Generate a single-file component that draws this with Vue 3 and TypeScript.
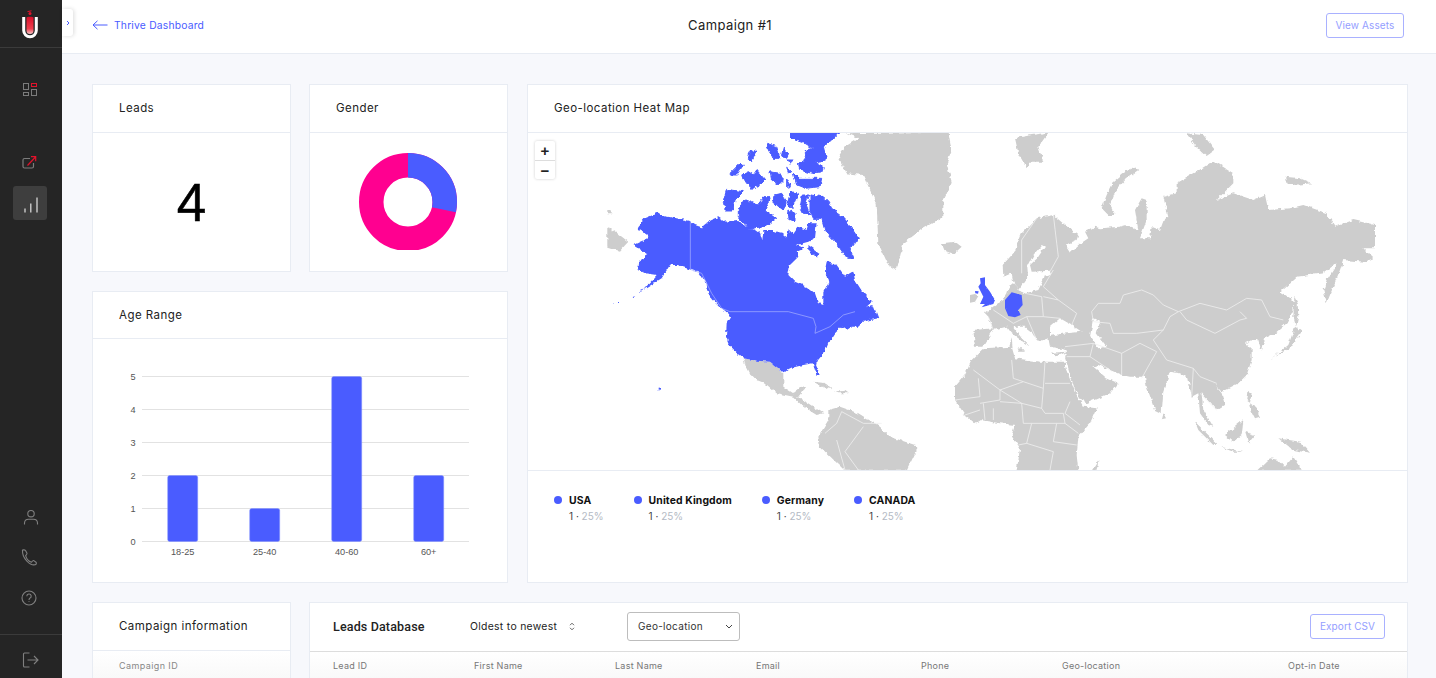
<script setup lang="ts">
const legend = [
  { name: 'USA' },
  { name: 'United Kingdom' },
  { name: 'Germany' },
  { name: 'CANADA' },
]
const columns = [
  { label: 'Lead ID', width: 141 },
  { label: 'First Name', width: 141 },
  { label: 'Last Name', width: 141 },
  { label: 'Email', width: 165 },
  { label: 'Phone', width: 141 },
  { label: 'Geo-location', width: 226 },
  { label: 'Opt-in Date', width: 90 },
]
const ages = [
  { label: '18-25', value: 2 },
  { label: '25-40', value: 1 },
  { label: '40-60', value: 5 },
  { label: '60+', value: 2 },
]
const ticks = [0, 1, 2, 3, 4, 5]
const tickY = (v: number) => 541.5 - v * 33
const barX = (i: number) => 167.7 + i * 82

const donutR = 36.75
const donutC = 2 * Math.PI * donutR
const blueDash = `${(donutC * 102) / 360} ${donutC}`

const arctic = [
  'M215 5 375 5 350 30 325 50 335 90 300 95 325 110 320 125 290 130 255 120 250 100 275 85 270 62 295 55 270 40 240 30Z',
  'M155 40 185 50 195 85 175 85 160 60Z',
  'M205 55 220 75 215 85 200 75Z',
  'M235 130 250 145 290 145 320 145 315 170 270 175 245 165Z',
  'M45 130 75 100 85 105 65 135 50 135Z',
  'M80 135 100 125 115 135 125 120 150 150 135 165 110 175 95 160Z',
  'M165 125 195 130 205 150 190 165 170 150Z',
  'M215 150 228 170 215 172Z',
  'M105 65 125 60 120 75 110 95 100 85Z',
  'M215 90 235 90 225 100Z',
  'M215 112 230 125 222 130Z',
  'M35 178 85 185 60 210 55 240 30 240 25 215Z',
  'M90 210 130 225 150 200 165 200 150 240 185 265 150 290 100 295 70 260 70 235Z',
  'M180 195 200 190 215 215 205 240 185 225 175 215Z',
  'M225 185 250 190 230 235 218 225Z',
  'M222 240 240 250 240 275 218 265Z',
  'M262 195 282 195 272 220 285 255 265 250 255 230Z',
  'M285 195 325 200 340 215 350 235 370 250 390 265 410 295 430 325 405 360 415 385 395 385 365 340 345 320 330 300 320 265 295 265 285 240Z',
]
const northAmerica =
  'M385 248 400 258 440 265 478 272 495 285 515 292 530 278 545 270 565 262 585 275 625 270 640 285 655 295 672 295 690 308 697 330 700 303 730 303 755 308 770 322 775 298 790 312 805 290 830 300 835 280 860 280 855 325 835 335 800 345 825 355 800 365 805 380 780 405 775 435 795 455 830 470 855 490 865 520 880 525 880 490 895 460 885 420 890 395 920 405 935 425 945 440 970 425 975 450 1000 490 1025 515 1010 530 1030 525 1045 565 1020 570 1000 575 985 590 965 590 950 600 935 590 915 610 895 640 885 665 860 695 858 705 870 735 860 735 848 700 820 705 780 715 760 730 745 715 720 695 680 692 640 685 615 665 600 650 588 620 590 580 600 562 597 552 570 530 545 505 530 478 525 455 510 430 485 420 440 405 420 405 395 445 340 480 380 435 345 430 322 418 325 395 340 385 355 375 330 358 310 345 330 335 355 325 345 310 320 295 345 265Z'
const eurasia =
  'M160 440 158 405 190 370 215 310 260 265 310 255 345 285 385 315 380 330 345 345 360 368 385 345 415 325 405 305 435 290 450 295 510 290 530 285 555 295 565 300 555 240 575 205 590 210 590 270 570 325 600 325 605 290 630 300 645 260 655 262 640 200 680 190 680 160 740 125 790 92 850 130 850 160 800 210 850 190 910 210 945 195 955 240 1020 235 1060 225 1130 250 1155 290 1210 270 1275 285 1275 355 1240 355 1270 385 1245 395 1180 390 1170 420 1130 520 1120 480 1130 450 1165 395 1120 430 1040 440 990 485 1030 510 1030 540 1010 580 975 610 945 625 935 665 925 630 905 630 885 640 905 655 905 690 890 735 865 760 815 785 790 760 815 790 825 825 800 840 780 815 755 790 760 840 790 890 775 885 750 850 745 790 725 800 715 745 690 730 660 725 640 785 635 850 615 840 590 770 585 740 540 740 515 735 480 720 445 705 430 710 470 745 505 760 480 790 410 820 400 815 375 780 355 715 345 680 350 660 300 650 295 625 265 635 250 610 225 590 190 590 215 625 240 650 225 640 185 610 170 590 130 600 100 650 75 650 70 600 130 595 115 560 105 550 130 530 160 510 172 490 180 462 195 465 205 480 225 490 265 480 285 440 240 430 205 480 190 455 185 430Z'
const seas = [
  'M275 345 285 350 262 385 240 405 245 425 300 422 305 430 275 440 265 470 225 490 205 480 235 450 232 410 250 375Z',
  'M300 590 330 565 365 585 395 605 330 612 300 618Z',
  'M430 565 450 575 440 610 470 650 445 655 420 620Z',
]
const islandsB = [
  'M555 112 565 120 530 145 495 185 480 225 495 255 475 255 455 235 470 195 490 155 525 125Z',
  'M195 25 245 15 295 8 265 50 280 95 240 95 230 115 205 70Z',
  'M710 10 760 15 795 60 770 78 735 45Z',
  'M1005 140 1050 145 1085 160 1030 165 1010 165Z',
  'M1033 500 1043 520 1045 560 1038 590 1030 560Z',
  'M1035 590 1055 605 1030 640 1020 655 970 680 960 690 990 665 1015 645Z',
  'M895 785 905 790 900 815 892 810Z',
  'M900 820 915 830 930 860 915 865 905 845Z',
  'M825 915 880 870 875 915 850 935Z',
  'M735 875 800 940 790 945 745 900Z',
  'M810 950 880 965 850 965Z',
  'M885 905 915 915 895 940Z',
  'M985 925 1050 935 1080 968 1030 960Z',
  'M920 1022 960 985 985 990 1005 1010 1030 980 1055 1022Z',
  'M640 850 648 865 635 868Z',
  'M445 990 440 1022 425 1022Z',
  'M300 668 350 665 320 680Z',
  'M185 625 188 655 178 650Z',
  'M210 650 225 665 200 665Z',
]
const bordersB = [
  'M425 545 445 520 510 520 520 495 575 480 610 495 640 525 685 545',
  'M685 545 750 520 830 540 890 505 935 510 960 560 1000 570',
  'M690 545 710 570 795 610 870 570 890 565 870 545',
  'M425 545 430 575 480 580 490 610 560 610 640 600 660 560 685 545',
  'M640 600 610 630 650 690 730 715 750 740 800 760',
  'M430 640 515 670 515 735',
  'M515 670 570 640 620 665 600 700 575 745',
  'M310 420 280 470 325 510 380 550 365 585',
  'M260 265 215 330 215 430',
  'M310 255 325 380 300 425',
  'M225 490 275 500 280 560 230 560 190 580 130 540',
  'M345 650 430 640 420 680 480 720',
  'M350 680 420 680',
  'M280 500 325 510 M280 560 330 565 M230 560 260 630 M130 600 115 560',
  'M730 715 725 800 M750 790 800 840',
]
const africa =
  'M100 10 185 5 195 40 270 50 285 50 345 50 345 65 375 140 400 185 440 190 420 235 385 275 380 330 385 378 200 378 210 310 185 270 195 240 150 235 90 225 75 235 45 210 15 165 15 125 45 90 65 45Z'
const bordersAfrica = [
  'M70 75 150 135 220 110 280 130 285 50',
  'M185 45 190 100 220 110',
  'M285 115 360 115',
  'M280 130 275 190 215 175 150 135',
  'M85 100 90 155 15 165',
  'M150 135 150 165 90 175',
  'M215 175 220 235',
  'M275 190 285 205 340 205 345 235 320 235 245 235 220 235',
  'M360 170 345 205 390 240',
  'M245 235 230 295 205 300',
  'M320 235 310 290 380 300',
  'M230 295 310 320 300 375',
  'M345 235 385 265',
  'M100 175 105 225 M130 190 130 225 M150 170 215 175 M45 210 90 195',
]
const grayA = [
  'M950 10 1255 5 1265 60 1250 100 1265 155 1240 210 1240 260 1180 295 1120 340 1100 420 1075 405 1045 340 1040 225 1000 135 950 130 925 80 945 50 985 25Z',
  'M1235 340 1275 335 1295 350 1268 375 1245 365Z',
  'M232 290 262 310 295 335 270 362 232 350Z',
  'M232 240 245 242 245 250 232 250Z',
  'M640 685 680 692 720 695 745 715 760 735 760 770 790 790 815 770 825 775 805 800 850 830 880 850 860 855 820 830 790 800 740 790 705 760 680 750 650 710Z',
  'M640 690 685 755 660 730Z',
  'M850 755 880 758 905 778 880 772Z',
  'M915 785 945 782 955 790 925 790Z',
  'M895 840 930 830 985 850 1050 890 1080 920 1155 945 1160 960 1130 1022 945 1022 870 950 865 920 895 870Z',
]
const bordersA = [
  'M885 910 920 880 935 845',
  'M920 930 945 1020',
  'M935 845 1000 880 1055 880',
  'M985 1020 945 965 1000 890',
]
const blueDots = [
  'M245 516h5v3h-5Z',
  'M265 513h5v3h-5Z',
  'M305 498l8-3v3l-6 3Z',
  'M330 483l8-4v3l-6 3Z',
  'M386 776h7v6h-7Z',
  'M835 345 870 370 860 385 835 365Z',
]
</script>

<template>
  <div class="app">
    <aside class="sidebar">
      <div class="logo">
        <svg width="18" height="30" viewBox="0 0 18 30">
          <defs>
            <linearGradient id="logoRed" x1="0" y1="0" x2="0" y2="1">
              <stop offset="0" stop-color="#d8102a" />
              <stop offset="0.7" stop-color="#f0404f" />
              <stop offset="1" stop-color="#f7c6c6" />
            </linearGradient>
          </defs>
          <circle cx="9" cy="3.4" r="1.5" fill="#e2122b" />
          <path d="M6.5 1.6 10.5 .8" stroke="#e2122b" stroke-width="1" />
          <path d="M5.5 7.5C5.5 6.5 12.5 6.5 12.5 7.5V20.5A3.5 3.5 0 0 1 5.5 20.5Z" fill="url(#logoRed)" />
          <path d="M2.7 7V20.5A6.3 6.3 0 0 0 15.3 20.5V7" fill="none" stroke="#fff" stroke-width="3" />
        </svg>
      </div>
      <nav class="nav">
        <div class="nav-item first">
          <svg width="34" height="34" viewBox="0 0 34 34" fill="none" stroke="#7c7c7c" stroke-width="1">
            <rect x="10.5" y="11.5" width="5" height="6" />
            <rect x="18.5" y="11.5" width="5" height="3" stroke="#e2122b" />
            <rect x="10.5" y="20.5" width="5" height="3" />
            <rect x="18.5" y="17.5" width="5" height="6" />
          </svg>
        </div>
        <div class="nav-item second">
          <svg width="34" height="34" viewBox="0 0 34 34" fill="none" stroke="#7c7c7c" stroke-width="1.2">
            <path d="M17 13.5H11.5A1.5 1.5 0 0 0 10 15V21.5A1.5 1.5 0 0 0 11.5 23H19A1.5 1.5 0 0 0 20.5 21.5V18" />
            <path d="M14.5 20.5 22.5 12M18 11.7H22.7V16.2" stroke="#e2122b" />
          </svg>
        </div>
        <div class="nav-item active">
          <svg width="34" height="34" viewBox="0 0 34 34" fill="none" stroke="#d6d6d6" stroke-width="1.3">
            <path d="M12 26.5V22.5M17.8 26.5V17.5M24 26.5V11.5" />
          </svg>
        </div>
      </nav>
      <div class="nav bottom">
        <div class="nav-item">
          <svg width="34" height="34" viewBox="0 0 34 34" fill="none" stroke="#808080" stroke-width="1.1">
            <circle cx="18" cy="13.7" r="3.2" />
            <path d="M11.5 24.5V23A4 4 0 0 1 15.5 19.2H20.5A4 4 0 0 1 24.5 23V24.5" />
          </svg>
        </div>
        <div class="nav-item">
          <svg width="34" height="34" viewBox="0 0 34 34" fill="none" stroke="#808080" stroke-width="1.1">
            <path d="M9.5 9.5C9 8.8 11.8 8.5 12.5 9.5L14 12.2C14.3 13 13 14 12.6 14.6 13.5 17.8 16.5 20.5 18.4 21.2 19 20.5 20 19.2 20.8 19.6L23 21.2C23.8 22 23.2 23.5 22 23.8 17.5 24.8 9 17.5 9.5 9.5Z" />
          </svg>
        </div>
        <div class="nav-item">
          <svg width="34" height="34" viewBox="0 0 34 34" fill="none" stroke="#808080" stroke-width="1.1">
            <circle cx="16" cy="17" r="7" />
            <path d="M13.8 15.2A2.2 2.2 0 1 1 16.8 17.3C16.2 17.7 16 18.2 16 19" />
            <path d="M16 20.3V21" />
          </svg>
        </div>
      </div>
      <div class="logout">
        <svg width="34" height="34" viewBox="0 0 34 34" fill="none" stroke="#808080" stroke-width="1.1">
          <path d="M16.5 10H11.5A1 1 0 0 0 10.5 11V23A1 1 0 0 0 11.5 24H16.5" />
          <path d="M14.5 17H25M21 13 25 17 21 21" />
        </svg>
      </div>
    </aside>

    <div class="toggle">
      <svg width="6" height="8" viewBox="0 0 6 8" fill="none" stroke="#4a5cff" stroke-width="1">
        <path d="M2 2 4 4 2 6" />
      </svg>
    </div>

    <div class="content">
      <header class="topbar">
        <a class="back">
          <svg width="16" height="10" viewBox="0 0 16 10" fill="none" stroke="#4a5cff" stroke-width="1">
            <path d="M15.5 5H1M5.5 .8 1 5 5.5 9.2" />
          </svg>
          Thrive Dashboard
        </a>
        <h1 class="title">Campaign #1</h1>
        <button class="outline view">View Assets</button>
      </header>

      <main class="page">
        <div class="top-row">
          <div class="left-col">
            <div class="small-row">
              <section class="card small">
                <div class="card-head">Leads</div>
                <div class="lead-count">4</div>
              </section>
              <section class="card small">
                <div class="card-head">Gender</div>
                <div class="donut">
                  <svg width="100" height="97" viewBox="0 0 100 97">
                    <circle cx="50" cy="49" :r="donutR" fill="none" stroke="#ff0090" stroke-width="24.5" />
                    <circle
                      cx="50"
                      cy="49"
                      :r="donutR"
                      fill="none"
                      stroke="#4a5cff"
                      stroke-width="24.5"
                      :stroke-dasharray="blueDash"
                      transform="rotate(-90 50 49)"
                    />
                  </svg>
                </div>
              </section>
            </div>
            <section class="card age">
              <div class="card-head age-head">Age Range</div>
              <svg class="chart" width="414" height="243" viewBox="93 339 414 243">
                <g v-for="t in ticks" :key="t">
                  <line x1="142" x2="469" :y1="tickY(t)" :y2="tickY(t)" stroke="#e2e2e2" stroke-width="1" />
                  <text x="135.5" :y="tickY(t) + 3.5" text-anchor="end" class="axis">{{ t }}</text>
                </g>
                <g v-for="(a, i) in ages" :key="a.label">
                  <rect
                    :x="barX(i)"
                    :y="tickY(a.value)"
                    width="30"
                    :height="a.value * 33"
                    rx="2"
                    fill="#4a5cff"
                    stroke="#8390ff"
                    stroke-width=".5"
                  />
                  <text :x="barX(i) + 15" y="555" text-anchor="middle" class="axis">{{ a.label }}</text>
                </g>
              </svg>
            </section>
          </div>

          <section class="card geo">
            <div class="card-head">Geo-location Heat Map</div>
            <div class="map">
              <svg class="map-svg" width="879" height="337" viewBox="528 133 879 337">
                <defs>
                  <filter
                    id="coast"
                    filterUnits="userSpaceOnUse"
                    x="500"
                    y="100"
                    width="940"
                    height="400"
                    color-interpolation-filters="sRGB"
                  >
                    <feTurbulence type="fractalNoise" baseFrequency="0.22" numOctaves="2" seed="4" result="n" />
                    <feDisplacementMap in="SourceGraphic" in2="n" scale="4.5" xChannelSelector="R" yChannelSelector="G" />
                    <feGaussianBlur stdDeviation="0.35" />
                  </filter>
                  <filter
                    id="coastFine"
                    filterUnits="userSpaceOnUse"
                    x="500"
                    y="100"
                    width="940"
                    height="400"
                    color-interpolation-filters="sRGB"
                  >
                    <feTurbulence type="fractalNoise" baseFrequency="0.35" numOctaves="2" seed="9" result="n" />
                    <feDisplacementMap in="SourceGraphic" in2="n" scale="2" xChannelSelector="R" yChannelSelector="G" />
                    <feGaussianBlur stdDeviation="0.25" />
                  </filter>
                </defs>
                <g filter="url(#coast)">
                  <g transform="translate(530 130) scale(.33333)">
                    <path v-for="d in grayA" :key="d" :d="d" fill="#cdcdcd" />
                    <path :d="northAmerica" fill="#4a5cff" />
                    <path v-for="d in blueDots" :key="d" :d="d" fill="#4a5cff" />
                  </g>
                  <g transform="translate(715 130) scale(.33333)">
                    <path
                      v-for="d in arctic"
                      :key="d"
                      :d="d"
                      fill="#4a5cff"
                      stroke="#4a5cff"
                      stroke-width="3"
                      stroke-linejoin="round"
                    />
                  </g>
                  <g transform="translate(950 130) scale(.33333)">
                    <path :d="eurasia" fill="#cdcdcd" />
                    <path v-for="d in seas" :key="d" :d="d" fill="#fff" />
                    <path v-for="d in islandsB" :key="d" :d="d" fill="#cdcdcd" />
                  </g>
                  <g transform="translate(950 345) scale(.33333)">
                    <path :d="africa" fill="#cdcdcd" />
                  </g>
                </g>
                <g transform="translate(530 130) scale(.33333)">
                  <path v-for="d in bordersA" :key="d" :d="d" class="border" />
                  <path
                    d="M481 275V418L515 430 545 490 575 535 600 545H775L850 565 858 590 855 610 900 590 940 555 975 545"
                    class="border blue"
                  />
                </g>
                <g transform="translate(950 130) scale(.33333)">
                  <path v-for="d in bordersB" :key="d" :d="d" class="border" />
                </g>
                <g transform="translate(950 345) scale(.33333)">
                  <path v-for="d in bordersAfrica" :key="d" :d="d" class="border" />
                </g>
                <g filter="url(#coastFine)">
                  <g transform="translate(950 230) scale(.33333)">
                    <path d="M60 195 75 192 85 198 75 215 60 218Z" fill="#cdcdcd" />
                    <path
                      d="M90 145 105 142 105 165 120 185 135 210 130 222 95 232 105 222 90 222 100 200 85 170 92 160Z"
                      fill="#4a5cff"
                    />
                    <path d="M75 183 86 184 84 191 76 190Z" fill="#4a5cff" />
                    <path
                      d="M185 187 215 195 218 225 205 240 212 255 195 262 175 258 165 235 165 210Z"
                      fill="#4a5cff"
                    />
                  </g>
                </g>
              </svg>
              <div class="zoom">
                <button class="zoom-btn">+</button>
                <button class="zoom-btn">−</button>
              </div>
            </div>
            <div class="legend">
              <div v-for="l in legend" :key="l.name" class="legend-item">
                <span class="dot"></span>
                <div>
                  <div class="legend-name">{{ l.name }}</div>
                  <div class="legend-val">1 · <span class="pct">25%</span></div>
                </div>
              </div>
            </div>
          </section>
        </div>

        <div class="bottom-row">
          <section class="card info">
            <div class="card-head">Campaign information</div>
            <div class="info-body">Campaign ID</div>
          </section>
          <section class="card db">
            <div class="db-head">
              <h2 class="db-title">Leads Database</h2>
              <div class="sort">
                Oldest to newest
                <svg width="6" height="9" viewBox="0 0 6 9" fill="none" stroke="#555" stroke-width=".9">
                  <path d="M1 3.2 3 1.2 5 3.2M1 5.8 3 7.8 5 5.8" />
                </svg>
              </div>
              <div class="select">
                Geo-location
                <svg width="8" height="5" viewBox="0 0 8 5" fill="none" stroke="#444" stroke-width="1">
                  <path d="M1 1 4 4 7 1" />
                </svg>
              </div>
              <button class="outline export">Export CSV</button>
            </div>
            <div class="db-cols">
              <div v-for="c in columns" :key="c.label" class="db-col" :style="{ width: c.width + 'px' }">
                {{ c.label }}
              </div>
            </div>
          </section>
        </div>
      </main>
    </div>
  </div>
</template>

<style>
html,
body {
  margin: 0;
  overflow: hidden;
}
</style>

<style scoped>
.app {
  display: flex;
  position: relative;
  height: 678px;
  overflow: hidden;
  background: #f7f8fc;
  font-family: Inter, "Open Sans", sans-serif;
  color: #222;
}
.sidebar {
  width: 62px;
  flex: none;
  display: flex;
  flex-direction: column;
  background: #252525;
}
.logo {
  height: 48px;
  flex: none;
  border-bottom: 1px solid #3b3b3b;
  display: flex;
  justify-content: center;
  padding: 10px 2px 0 0;
  box-sizing: border-box;
}
.nav {
  display: flex;
  flex-direction: column;
  padding-left: 13px;
}
.nav-item {
  width: 34px;
  height: 34px;
  border-radius: 3px;
}
.nav-item svg {
  display: block;
}
.first {
  margin-top: 24px;
}
.second {
  margin-top: 39px;
  margin-bottom: 7px;
}
.active {
  background: #3e3e3e;
}
.bottom {
  margin-top: auto;
  gap: 6.5px;
  padding-bottom: 19px;
}
.logout {
  height: 44px;
  flex: none;
  border-top: 1px solid #3b3b3b;
  padding: 8px 0 0 13px;
  box-sizing: border-box;
}
.logout svg {
  display: block;
}
.toggle {
  position: absolute;
  left: 62px;
  top: 9px;
  width: 11px;
  height: 27px;
  background: #fff;
  border-radius: 0 3px 3px 0;
  box-shadow: 1px 0 4px rgba(0, 0, 0, 0.14);
  display: flex;
  align-items: center;
  justify-content: center;
}
.content {
  flex: 1;
  min-width: 0;
}
.topbar {
  height: 54px;
  box-sizing: border-box;
  background: #fff;
  border-bottom: 1px solid #e8ecf3;
  display: flex;
  align-items: center;
  padding: 0 32px 2px 30px;
}
.back {
  display: flex;
  align-items: center;
  gap: 6px;
  margin-bottom: 2px;
  font-size: 10.3px;
  color: #4a5cff;
  letter-spacing: 0.2px;
}
.title {
  margin: 0 0 2px 484px;
  font-size: 13px;
  font-weight: 400;
  letter-spacing: 0.4px;
  color: #222;
}
.outline {
  font-family: inherit;
  background: #fff;
  border: 1px solid #a9b1ff;
  border-radius: 3px;
  color: #949eff;
  font-size: 10px;
  height: 25px;
  padding: 0;
  letter-spacing: 0.1px;
}
.view {
  margin-left: auto;
  width: 78px;
  padding-bottom: 2px;
}
.page {
  padding: 30px 28px 0 30px;
}
.top-row {
  display: flex;
  gap: 19px;
}
.left-col {
  width: 416px;
  display: flex;
  flex-direction: column;
  gap: 19px;
}
.small-row {
  display: flex;
  gap: 18px;
}
.card {
  background: #fff;
  border: 1px solid #e8ecf3;
  box-sizing: border-box;
}
.small {
  width: 199px;
  height: 188px;
}
.card-head {
  height: 48px;
  box-sizing: border-box;
  border-bottom: 1px solid #e8ecf3;
  padding: 0 0 2px 26px;
  display: flex;
  align-items: center;
  font-size: 11.5px;
  letter-spacing: 0.45px;
  color: #222;
}
.age-head {
  height: 47px;
  padding-bottom: 0;
}
.lead-count {
  font-family: "Liberation Sans", Arial, sans-serif;
  font-size: 53px;
  line-height: 140px;
  text-align: center;
  color: #000;
  -webkit-text-stroke: 0.5px #000;
}
.donut {
  display: flex;
  justify-content: center;
  padding: 20px 2px 0 0;
}
.age {
  height: 292px;
}
.chart {
  display: block;
}
.axis {
  font-family: "Liberation Sans", Arial, sans-serif;
  font-size: 9.2px;
  fill: #555;
}
.geo {
  width: 881px;
  height: 499px;
  flex: none;
}
.map {
  position: relative;
  height: 337px;
  overflow: hidden;
}
.map-svg {
  display: block;
}
.border {
  fill: none;
  stroke: #f0f0f0;
  stroke-width: 2.4;
}
.border.blue {
  stroke: #a3adff;
  stroke-width: 2.2;
}
.zoom {
  position: absolute;
  left: 7px;
  top: 8px;
  width: 20px;
  display: flex;
  flex-direction: column;
  background: #fff;
  border-radius: 2px;
  box-shadow: 0 0 3px rgba(0, 0, 0, 0.2);
}
.zoom-btn {
  height: 19px;
  padding: 0;
  border: 0;
  background: transparent;
  font-family: "Liberation Sans", Arial, sans-serif;
  font-size: 15px;
  font-weight: 700;
  line-height: 19px;
  color: #222;
}
.zoom-btn + .zoom-btn {
  border-top: 1px solid #ddd;
}
.legend {
  border-top: 1px solid #e8ecf3;
  display: flex;
  gap: 30px;
  padding: 23px 0 0 26px;
}
.legend-item {
  display: flex;
  gap: 7px;
}
.dot {
  width: 8px;
  height: 8px;
  margin-top: 2px;
  border-radius: 50%;
  background: #4a5cff;
}
.legend-name {
  font-size: 10.4px;
  font-weight: 700;
  line-height: 13px;
  letter-spacing: 0.12px;
  color: #111;
}
.legend-val {
  margin-top: 3px;
  font-size: 10px;
  line-height: 13px;
  color: #444;
}
.pct {
  color: #b4bac4;
}
.bottom-row {
  display: flex;
  gap: 18px;
  margin-top: 19px;
}
.info {
  width: 199px;
  flex: none;
  height: 100px;
}
.info-body {
  padding: 9px 0 0 26px;
  height: 60px;
  font-size: 9px;
  letter-spacing: 0.4px;
  color: #888;
  background: linear-gradient(#fff, #f6f6f6 40px);
}
.db {
  width: 1099px;
  flex: none;
  height: 100px;
}
.db-head {
  height: 49px;
  box-sizing: border-box;
  border-bottom: 1px solid #ddd;
  display: flex;
  align-items: center;
  padding: 0 22px 2px 23px;
}
.db-title {
  margin: 0;
  width: 137px;
  font-family: Roboto, sans-serif;
  font-size: 12.5px;
  font-weight: 500;
  letter-spacing: 0.15px;
  color: #222;
}
.sort {
  width: 157px;
  display: flex;
  align-items: center;
  gap: 12px;
  font-size: 10.4px;
  letter-spacing: 0.3px;
  color: #222;
}
.select {
  width: 113px;
  height: 29px;
  box-sizing: border-box;
  border: 1px solid #bdbdbd;
  border-radius: 3px;
  display: flex;
  align-items: center;
  justify-content: space-between;
  padding: 0 6px 0 10px;
  font-size: 10px;
  letter-spacing: 0.3px;
  color: #333;
}
.export {
  margin-left: auto;
  width: 75px;
}
.db-cols {
  display: flex;
  padding: 8px 0 0 23px;
  height: 50px;
  background: linear-gradient(#fff, #f6f6f6 40px);
}
.db-col {
  flex: none;
  font-size: 9px;
  letter-spacing: 0.25px;
  color: #777;
}
</style>
